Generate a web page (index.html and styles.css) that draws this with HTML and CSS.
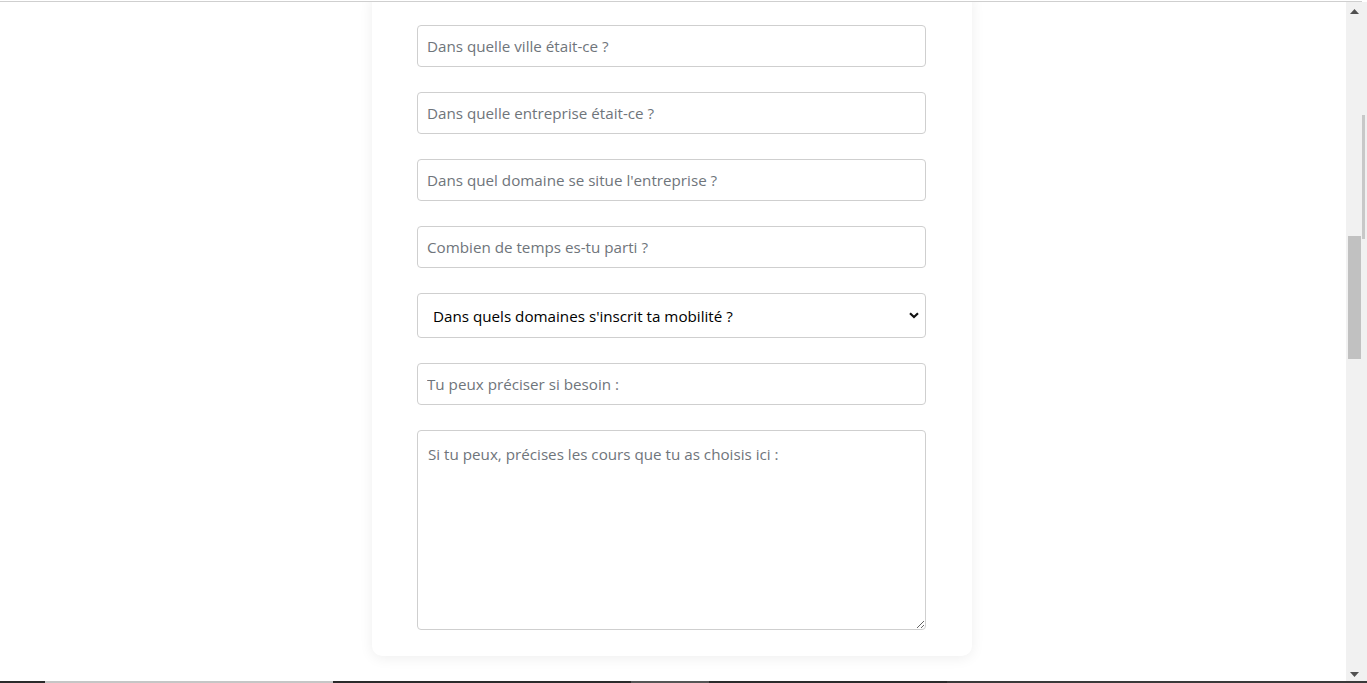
FILE: index.html
```html
<!DOCTYPE html>
<html lang="fr">
<head>
<meta charset="utf-8">
<title>Mobilité</title>
<link rel="stylesheet" href="styles.css">
</head>
<body>
<div class="screen">
  <div class="top-gap"></div>
  <div class="top-rule"></div>
  <div class="middle">
    <main class="main">
      <form class="card">
        <input class="field" type="text" placeholder="Dans quelle ville était-ce ?">
        <input class="field" type="text" placeholder="Dans quelle entreprise était-ce ?">
        <input class="field" type="text" placeholder="Dans quel domaine se situe l'entreprise ?">
        <input class="field" type="text" placeholder="Combien de temps es-tu parti ?">
        <div class="select-wrap">
          <select class="select">
            <option>Dans quels domaines s'inscrit ta mobilité ?</option>
          </select>
          <svg class="chevron" width="10" height="7" viewBox="0 0 10 7"><path d="M1 1.2 L5 5 L9 1.2" fill="none" stroke="#111" stroke-width="2.2"/></svg>
        </div>
        <input class="field" type="text" placeholder="Tu peux préciser si besoin :">
        <textarea class="area" placeholder="Si tu peux, précises les cours que tu as choisis ici :"></textarea>
      </form>
    </main>
    <div class="scrollbar">
      <svg class="arrow" width="9" height="5" viewBox="0 0 9 5"><path d="M0 5 L4.5 0 L9 5 Z" fill="#505050"/></svg>
      <div class="track">
        <div class="thumb"></div>
      </div>
      <svg class="arrow" width="9" height="5" viewBox="0 0 9 5"><path d="M0 0 L4.5 5 L9 0 Z" fill="#505050"/></svg>
      <div class="ghost"></div>
    </div>
  </div>
  <div class="taskbar">
    <div class="seg s1"></div>
    <div class="seg s2"></div>
    <div class="seg s3"></div>
    <div class="seg s4"></div>
    <div class="seg s5"></div>
    <div class="seg s6"></div>
  </div>
</div>
</body>
</html>
```

FILE: styles.css
```css
* { box-sizing: border-box; }
html, body { margin: 0; padding: 0; background: #fff; }
body { width: 1367px; height: 683px; overflow: hidden; font-family: "Open Sans", "Noto Sans", sans-serif; }

.screen { display: flex; flex-direction: column; height: 683px; }
.top-gap { height: 1px; background: #fff; }
.top-rule { height: 1px; width: 1362px; background: #cfcfcf; }

.middle { flex: 1; display: flex; min-height: 0; }
.main { flex: 1; overflow: hidden; display: flex; justify-content: center; padding-right: 2px; }

.card {
  width: 600px;
  height: 664px;
  margin-top: -10px;
  padding: 33px 46px 0 45px;
  background: #fff;
  border-radius: 10px;
  box-shadow: 0 2px 14px rgba(0, 0, 0, 0.07);
  display: flex;
  flex-direction: column;
}

.field {
  display: block;
  width: 509px;
  height: 42px;
  margin: 0 0 25px 0;
  padding: 0 9px;
  border: 1px solid #cfcfcf;
  border-radius: 4px;
  font-family: "Open Sans", "Noto Sans", sans-serif;
  font-size: 15.2px;
  color: #212529;
  background: #fff;
  outline: none;
}
.field::placeholder, .area::placeholder { color: #6f757b; opacity: 1; }

.select-wrap { position: relative; width: 509px; height: 45px; margin-bottom: 25px; }
.select {
  -webkit-appearance: none;
  appearance: none;
  width: 509px;
  height: 45px;
  padding: 0 30px 0 15px;
  border: 1px solid #cfcfcf;
  border-radius: 4px;
  background: #fff;
  font-family: "Open Sans", "Noto Sans", sans-serif;
  font-size: 15.2px;
  color: #000;
  outline: none;
}
.chevron { position: absolute; right: 7px; top: 19px; pointer-events: none; }

.area {
  display: block;
  width: 509px;
  height: 200px;
  margin: 0;
  padding: 11px 10px;
  border: 1px solid #cfcfcf;
  border-radius: 4px;
  font-family: "Open Sans", "Noto Sans", sans-serif;
  font-size: 15.2px;
  line-height: 24px;
  color: #212529;
  resize: vertical;
  outline: none;
}

.scrollbar {
  position: relative;
  width: 21px;
  background: #f1f1f1;
  display: flex;
  flex-direction: column;
  align-items: center;
  padding: 7px 0 4px 0;
}
.arrow { display: block; margin-right: 4px; flex: none; }
.track { flex: 1; width: 100%; padding-top: 222px; }
.thumb { width: 13px; height: 123px; margin-left: 2px; background: #c1c1c1; }
.ghost { position: absolute; left: 16px; top: 113px; width: 3px; height: 124px; background: #c8c8c8; }

.taskbar { height: 2px; display: flex; }
.seg { height: 2px; }
.s1 { width: 45px; background: #2b2b2b; }
.s2 { width: 288px; background: #c6c6c6; }
.s3 { width: 298px; background: #2b2b2b; }
.s4 { width: 78px; background: #555; }
.s5 { width: 238px; background: #2b2b2b; }
.s6 { flex: 1; background: #3a3a3a; }
```
